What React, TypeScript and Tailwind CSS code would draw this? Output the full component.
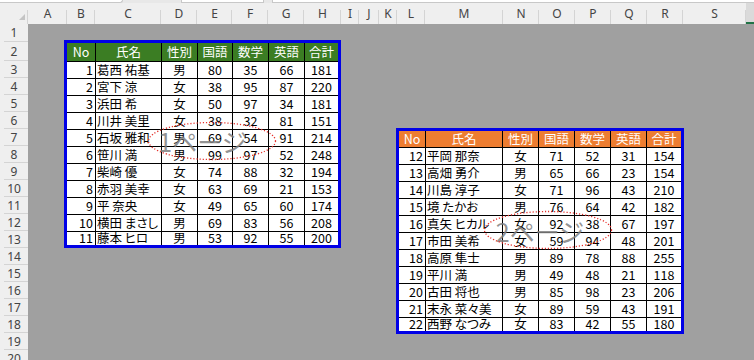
import React from 'react';

type Row = [number, string, string, number, number, number, number];

const COLUMNS: { label: string; cls: string }[] = [
  { label: 'A', cls: 'w-[39px]' },
  { label: 'B', cls: 'w-[28px]' },
  { label: 'C', cls: 'w-[66px]' },
  { label: 'D', cls: 'w-[36px]' },
  { label: 'E', cls: 'w-[35px]' },
  { label: 'F', cls: 'w-[36px]' },
  { label: 'G', cls: 'w-[36px]' },
  { label: 'H', cls: 'w-[37px]' },
  { label: 'I', cls: 'w-[18px]' },
  { label: 'J', cls: 'w-[20px]' },
  { label: 'K', cls: 'w-[18px]' },
  { label: 'L', cls: 'w-[28px]' },
  { label: 'M', cls: 'w-[78px]' },
  { label: 'N', cls: 'w-[36px]' },
  { label: 'O', cls: 'w-[36px]' },
  { label: 'P', cls: 'w-[36px]' },
  { label: 'Q', cls: 'w-[36px]' },
  { label: 'R', cls: 'w-[36px]' },
  { label: 'S', cls: 'w-[63px]' },
];

const HEADERS = ['No', '氏名', '性別', '国語', '数学', '英語', '合計'];

const PAGE1: Row[] = [
  [1, '葛西 祐基', '男', 80, 35, 66, 181],
  [2, '宮下 涼', '女', 38, 95, 87, 220],
  [3, '浜田 希', '女', 50, 97, 34, 181],
  [4, '川井 美里', '女', 38, 32, 81, 151],
  [5, '石坂 雅和', '男', 69, 54, 91, 214],
  [6, '笹川 満', '男', 99, 97, 52, 248],
  [7, '柴崎 優', '女', 74, 88, 32, 194],
  [8, '赤羽 美幸', '女', 63, 69, 21, 153],
  [9, '平 奈央', '女', 49, 65, 60, 174],
  [10, '横田 まさし', '男', 69, 83, 56, 208],
  [11, '藤本 ヒロ', '男', 53, 92, 55, 200],
];

const PAGE2: Row[] = [
  [12, '平岡 那奈', '女', 71, 52, 31, 154],
  [13, '高畑 勇介', '男', 65, 66, 23, 154],
  [14, '川島 淳子', '女', 71, 96, 43, 210],
  [15, '境 たかお', '男', 76, 64, 42, 182],
  [16, '真矢 ヒカル', '女', 92, 38, 67, 197],
  [17, '市田 美希', '女', 59, 94, 48, 201],
  [18, '高原 隼士', '男', 89, 78, 88, 255],
  [19, '平川 満', '男', 49, 48, 21, 118],
  [20, '古田 将也', '男', 85, 98, 23, 206],
  [21, '末永 菜々美', '女', 89, 59, 43, 191],
  [22, '西野 なつみ', '女', 83, 42, 55, 180],
];

const ROW_HEIGHTS = ['h-[18px]', 'h-[19px]', ...Array(18).fill('h-[17px]')];

function ColumnHeader() {
  return (
    <div className="flex h-[21px] bg-[#efefef] text-[12px] text-[#444] font-['Noto_Sans',sans-serif]">
      <div className="w-[28px] shrink-0 flex items-end justify-end pr-[3px] pb-[4px] bg-[linear-gradient(#d4d4d4,#d4d4d4)] bg-no-repeat bg-[length:1px_14px] bg-[position:right_bottom]">
        <div className="w-0 h-0 border-l-[6px] border-l-transparent border-b-[6px] border-b-[#c4c4c4]" />
      </div>
      {COLUMNS.map((c) => (
        <div
          key={c.label}
          className={`${c.cls} shrink-0 flex items-center justify-center bg-[linear-gradient(#d4d4d4,#d4d4d4)] bg-no-repeat bg-[length:1px_14px] bg-[position:right_bottom]`}
        >
          {c.label}
        </div>
      ))}
      <div className="flex-1 bg-[#dadada] border-b-2 border-[#217346]" />
    </div>
  );
}

function RowHeader() {
  return (
    <div className="w-[28px] shrink-0 bg-[#efefef] text-[12px] text-[#444] font-['Noto_Sans',sans-serif]">
      {ROW_HEIGHTS.map((h, i) => (
        <div
          key={i}
          className={`${h} flex items-center justify-center bg-[linear-gradient(#d4d4d4,#d4d4d4)] bg-no-repeat bg-[length:24px_1px] bg-[position:right_bottom]`}
        >
          {i + 1}
        </div>
      ))}
    </div>
  );
}

interface PageTableProps {
  rows: Row[];
  page: number;
  headerClass: string;
  colsClass: string;
  rowsClass: string;
  markClass: string;
}

function PageTable({ rows, page, headerClass, colsClass, rowsClass, markClass }: PageTableProps) {
  return (
    <div className="relative border-[3px] border-[#0000e6] shrink-0">
      <div className={`grid gap-px bg-black ${colsClass} ${rowsClass} text-[12.5px] leading-none`}>
        {HEADERS.map((h) => (
          <div key={h} className={`${headerClass} text-white flex items-center justify-center`}>
            {h}
          </div>
        ))}
        {rows.map((r) => (
          <React.Fragment key={r[0]}>
            <div className="bg-white flex items-center justify-end pr-[2px]">{r[0]}</div>
            <div className="bg-white flex items-center pl-[1px] whitespace-nowrap [font-feature-settings:'palt']">
              {r[1]}
            </div>
            <div className="bg-white flex items-center justify-center">{r[2]}</div>
            <div className="bg-white flex items-center justify-center">{r[3]}</div>
            <div className="bg-white flex items-center justify-center">{r[4]}</div>
            <div className="bg-white flex items-center justify-center">{r[5]}</div>
            <div className="bg-white flex items-center justify-center">{r[6]}</div>
          </React.Fragment>
        ))}
      </div>

      {/* page break preview watermark */}
      <div className={`absolute inset-0 flex items-center justify-center pointer-events-none ${markClass}`}>
        <span className="text-[25px] leading-none text-[#808080]/85">{page}ページ</span>
      </div>
    </div>
  );
}

function DottedEllipse({ className }: { className: string }) {
  return (
    <svg className={`absolute pointer-events-none overflow-visible ${className}`} width="130" height="40" viewBox="0 0 130 40">
      <ellipse
        cx="65"
        cy="20"
        rx="63.5"
        ry="18.5"
        fill="none"
        stroke="#e5322d"
        strokeWidth="1.3"
        strokeDasharray="1.2 1.9"
      />
    </svg>
  );
}

export default function App() {
  return (
    <div className="w-[754px] h-[360px] overflow-hidden bg-[#a0a0a0] flex flex-col font-['Noto_Sans_CJK_JP',sans-serif] text-black">
      {/* top edge of the formula bar */}
      <div className="h-[3px] flex bg-[#e8e8e8] shrink-0">
        <div className="w-[123px] bg-white border-b border-r border-[#c8c8c8] rounded-br-sm" />
        <div className="w-[58px]" />
        <div className="w-[83px] bg-white border-b border-x border-[#c8c8c8]" />
        <div className="w-[8px]" />
        <div className="flex-1 bg-white border-b border-l border-[#c8c8c8]" />
      </div>

      <ColumnHeader />

      <div className="flex flex-1 min-h-0">
        <RowHeader />

        <div className="flex-1 flex items-start">
          <div className="relative ml-[36px] mt-[16px]">
            <PageTable
              rows={PAGE1}
              page={1}
              headerClass="bg-[#3b7d23]"
              colsClass="grid-cols-[28px_65px_35px_34px_35px_35px_33px]"
              rowsClass="grid-rows-[18px_repeat(10,16px)_13px]"
              markClass="pb-[6px]"
            />
            <DottedEllipse className="left-[83px] top-[81px]" />
          </div>

          <div className="relative ml-[55px] mt-[104px]">
            <PageTable
              rows={PAGE2}
              page={2}
              headerClass="bg-[#ed7d31]"
              colsClass="grid-cols-[26px_76px_35px_35px_35px_35px_34px]"
              rowsClass="grid-rows-[16px_repeat(10,16px)_13px]"
              markClass=""
            />
            <DottedEllipse className="left-[87px] top-[82px]" />
          </div>
        </div>
      </div>
    </div>
  );
}
